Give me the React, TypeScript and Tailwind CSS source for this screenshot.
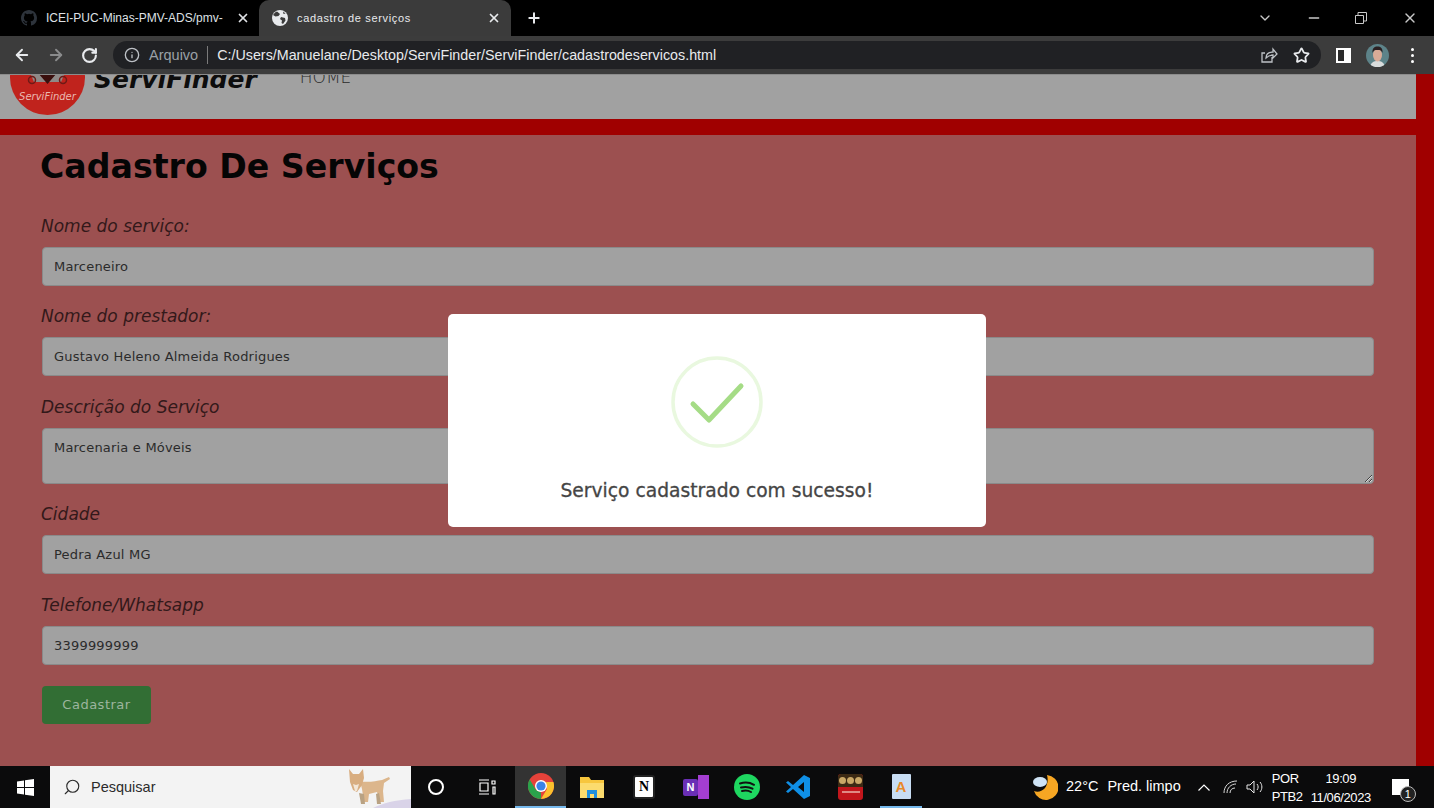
import React from "react"
import { ArrowLeft, ArrowRight, RotateCw, Info, Star, X, Plus, ChevronDown, Minus, Search } from "lucide-react"

const fields = [
  { label: "Nome do serviço:", value: "Marceneiro", top: "" },
  { label: "Nome do prestador:", value: "Gustavo Heleno Almeida Rodrigues", top: "mt-[20px]" },
  { label: "Descrição do Serviço", value: "Marcenaria e Móveis", top: "mt-[21px]", area: true },
  { label: "Cidade", value: "Pedra Azul MG", top: "mt-[20px]" },
  { label: "Telefone/Whatsapp", value: "3399999999", top: "mt-[21px]" },
]

const GithubMark = () => (
  <svg viewBox="0 0 16 16" className="h-4 w-4" fill="#2d333b">
    <path d="M8 0C3.58 0 0 3.58 0 8c0 3.54 2.29 6.53 5.47 7.59.4.07.55-.17.55-.38 0-.19-.01-.82-.01-1.49-2.01.37-2.53-.49-2.69-.94-.09-.23-.48-.94-.82-1.13-.28-.15-.68-.52-.01-.53.63-.01 1.08.58 1.23.82.72 1.21 1.87.87 2.33.66.07-.52.28-.87.51-1.07-1.78-.2-3.64-.89-3.64-3.95 0-.87.31-1.59.82-2.15-.08-.2-.36-1.02.08-2.12 0 0 .67-.21 2.2.82a7.4 7.4 0 0 1 4 0c1.53-1.04 2.2-.82 2.2-.82.44 1.1.16 1.92.08 2.12.51.56.82 1.27.82 2.15 0 3.07-1.87 3.75-3.65 3.95.29.25.54.73.54 1.48 0 1.07-.01 1.93-.01 2.2 0 .21.15.46.55.38A8 8 0 0 0 16 8c0-4.42-3.58-8-8-8z" />
  </svg>
)

const Globe = () => (
  <svg viewBox="0 0 16 16" className="h-4 w-4">
    <circle cx="8" cy="8" r="8" fill="#e8eaed" />
    <path d="M5 1.500 8 4 6.500 6 3.500 6.500 1 5 3 2.500ZM9 7l4 1 .5 2.500-2.500 3.500-1.500-1 .5-2.500-2-1.500ZM11 1.500l2.500 2-2 .5Z" fill="#3c3c3c" />
  </svg>
)

const Logo = () => (
  <div className="relative -mt-[35px] h-[75px] w-[75px] shrink-0 overflow-hidden rounded-full bg-[#c0231d]">
    <svg viewBox="0 0 75 75" className="absolute inset-0">
      <path d="M18 28h39l-6 14H24Z" fill="#8e8a88" />
      <path d="M28 33c-3-6 4-9 9.500-5 5.500-4 12.500-1 9.500 5l-9.500 11Z" fill="#3a0f0d" />
      <circle cx="22" cy="40" r="3.500" fill="none" stroke="#6e1a16" strokeWidth="1.500" />
      <circle cx="53" cy="40" r="3.500" fill="none" stroke="#6e1a16" strokeWidth="1.500" />
    </svg>
    <span className="absolute left-0 right-0 top-[52px] text-center font-['DejaVu_Sans'] text-[10px] italic leading-none text-[#eab9b0]">ServiFinder</span>
  </div>
)

const Spotify = () => (
  <svg viewBox="0 0 26 26" className="h-[26px] w-[26px]">
    <circle cx="13" cy="13" r="13" fill="#1ed760" />
    <path d="M6 9.500c5-1.500 10-1 14 1.300M7 13.500c4-1 8-.7 11.500 1.200M8 17c3.500-.8 6.500-.5 9 1" fill="none" stroke="#111" strokeWidth="2" strokeLinecap="round" />
  </svg>
)

const VsCode = () => (
  <svg viewBox="0 0 26 26" className="h-[26px] w-[26px]">
    <path d="M19 1l6 3v18l-6 3L8 15l-5 4-2-1.500L6 13 1 8.500 3 7l5 4Zm0 7-6 5 6 5Z" fill="#0f8fe6" />
  </svg>
)

const ChromeLogo = () => (
  <svg viewBox="0 0 26 26" className="h-[26px] w-[26px]">
    <circle cx="13" cy="13" r="13" fill="#e5423a" />
    <path d="M13 26A13 13 0 0 1 1.700 6.500L8 17l5 2.500Z" fill="#2aa24b" />
    <path d="M13 26 19 16l-1-7h7.400A13 13 0 0 1 13 26Z" fill="#fbc02d" />
    <circle cx="13" cy="13" r="6" fill="#fff" />
    <circle cx="13" cy="13" r="4.600" fill="#3b82e6" />
  </svg>
)

const Explorer = () => (
  <svg viewBox="0 0 24 22" className="h-[22px] w-[24px]">
    <path d="M0 1h9l2 3h13v4H0Z" fill="#f7c63d" />
    <path d="M0 7h24v15H0Z" fill="#fbdb6d" />
    <path d="M7 14h10v8h-3v-4h-4v4H7Z" fill="#1f8fdc" />
  </svg>
)

const Cat = () => (
  <svg viewBox="0 0 66 42" className="absolute bottom-0 right-0 h-[42px] w-[66px]">
    <path d="M28 42c10-5 22-8 38-9v9Z" fill="#d9d3e8" />
    <path d="M15 15c7 2 16 0 22-1l7-3 1 2-6 4-1 8 1 11h-4l-3-10-8 2-1 8h-4l-2-13Z" fill="#dcb68c" />
    <path d="M19 28l1 10h-4l-2-11ZM34 27l2 11h-4l-1-10Z" fill="#b9a283" />
    <path d="M4 3l4 5 6 0 4-5 1 9-2 7-5 7-4-2-3-8Z" fill="#d8ad80" />
    <path d="M8 18l3 1 3-1-2 7h-2Z" fill="#f3e6d6" />
  </svg>
)

const Avatar = () => (
  <svg viewBox="0 0 23 23" className="ml-[15px] h-[23px] w-[23px] rounded-full">
    <rect width="23" height="23" fill="#5d8389" />
    <path d="M4 23c1-5 4-6 7.500-6s6.500 1 7.500 6Z" fill="#d9dcdc" />
    <ellipse cx="11.500" cy="11" rx="4.500" ry="6.500" fill="#d9ab97" />
    <path d="M6.500 9c-.5-5 2-6.500 5-6.500s5.500 1.500 5 6.500c-1-2.500-2-3-5-3s-4 .5-5 3Z" fill="#2b2022" />
  </svg>
)

export default function App() {
  return (
    <div className="flex h-[808px] w-[1434px] flex-col overflow-hidden bg-black font-['Liberation_Sans',sans-serif]">
      {/* abas */}
      <div className="flex h-[36px] shrink-0 items-center bg-black text-[#e8eaed]">
        <div className="flex h-full w-[259px] items-center pl-[21px] pr-[9px] text-[12px] text-[#dfe1e5]">
          <GithubMark />
          <span className="ml-[9px] w-[180px] overflow-hidden whitespace-nowrap">ICEI-PUC-Minas-PMV-ADS/pmv-</span>
          <X className="ml-auto h-[14px] w-[14px]" strokeWidth={3} />
        </div>
        <div className="flex h-full w-[252px] items-center rounded-t-[10px] bg-[#3b3b3b] pl-[13px] pr-[10px] text-[11px] tracking-[0.65px]">
          <Globe />
          <span className="ml-[9px]">cadastro de serviços</span>
          <X className="ml-auto h-[14px] w-[14px]" strokeWidth={3} />
        </div>
        <Plus className="ml-[15px] h-[16px] w-[16px]" strokeWidth={3} />
        <div className="ml-auto flex items-center text-[#c8c8c8]">
          <ChevronDown className="h-[16px] w-[16px]" />
          <Minus className="ml-[33px] h-[16px] w-[16px]" />
          <svg viewBox="0 0 12 12" className="ml-[33px] h-[12px] w-[12px]" fill="none" stroke="currentColor">
            <path d="M.5 3.500h8v8h-8ZM3 3.500V.5h8.500V9H8.500" />
          </svg>
          <X className="ml-[35px] mr-[16px] h-[16px] w-[16px]" />
        </div>
      </div>

      {/* barra de endereço */}
      <div className="flex h-[38px] shrink-0 items-center bg-[#3c3c3c] text-[#e8eaed]">
        <ArrowLeft className="ml-[13px] h-[18px] w-[18px]" strokeWidth={2.500} />
        <ArrowRight className="ml-[16px] h-[18px] w-[18px] text-[#8a8b8c]" strokeWidth={2.500} />
        <RotateCw className="ml-[16px] h-[17px] w-[17px]" strokeWidth={3} />
        <div className="ml-[15px] flex h-[28px] w-[1208px] items-center rounded-full bg-[#202124] pl-[11px] pr-[11px] text-[14.500px]">
          <Info className="h-[16px] w-[16px] text-[#bdc1c6]" />
          <span className="ml-[9px] mt-[1px] text-[#9aa0a6]">Arquivo</span>
          <span className="ml-[9px] h-[18px] w-px bg-[#7a7a7a]" />
          <span className="ml-[9px] mt-[1px] text-[14.300px]">C:/Users/Manuelane/Desktop/ServiFinder/ServiFinder/cadastrodeservicos.html</span>
          <svg viewBox="0 0 18 18" className="ml-auto h-[18px] w-[18px]" fill="none" stroke="#bdc1c6" strokeWidth="1.300">
            <path d="M12 11v5H2V7h3M6 12c0-4 3-6 7-6V3l4 5-4 4V9c-3 0-5 1-7 3Z" />
          </svg>
          <Star className="ml-[15px] h-[17px] w-[17px]" strokeWidth={2.500} />
        </div>
        <div className="ml-[15px] flex h-[15px] w-[15px] border-2 border-white bg-[#2a2a2a]">
          <span className="ml-auto h-full w-[5px] bg-white" />
        </div>
        <Avatar />
        <div className="ml-[22px] flex flex-col gap-[3px]">
          <span className="h-[3px] w-[3px] rounded-full bg-white" />
          <span className="h-[3px] w-[3px] rounded-full bg-white" />
          <span className="h-[3px] w-[3px] rounded-full bg-white" />
        </div>
      </div>

      {/* página */}
      <div className="relative flex min-h-0 flex-1 bg-[#a00000]">
        <div className="flex w-[1416px] flex-col">
          <header className="flex h-[45px] shrink-0 items-start overflow-hidden border-t border-[#8c8c8c] bg-[#a1a1a1] pl-[10px]">
            <Logo />
            <span className="-mt-[8px] ml-[9px] font-['DejaVu_Sans'] text-[25px] font-bold italic leading-[26px] text-[#0d0d0d]">ServiFinder</span>
            <span className="-mt-[8px] ml-[43px] font-['DejaVu_Sans'] text-[17px] font-extralight leading-[20px] text-[#2a2a2a]">HOME</span>
          </header>
          <div className="h-[16px] shrink-0 bg-[#a00000]" />
          <main className="flex-1 bg-[#9c5050] pl-[40px] pr-[42px] font-['DejaVu_Sans',sans-serif]">
            <h1 className="mt-[12px] text-[33.200px] font-bold leading-[40px] text-[#050505]">Cadastro De Serviços</h1>
            <form className="mt-[29px] pl-[2px]">
              {fields.map((f) => (
                <div key={f.label} className={f.top}>
                  <label className="-ml-[1px] block text-[17px] italic leading-[20px] text-[#33191a]">{f.label}</label>
                  {f.area ? (
                    <textarea
                      readOnly
                      value={f.value}
                      className="mt-[11px] block h-[56px] w-full rounded-[4px] border border-[#8a8a8a] bg-[#a1a1a1] px-[11px] py-[9px] text-[13px] tracking-[0.2px] text-[#2b2b2b] outline-none"
                    />
                  ) : (
                    <input
                      readOnly
                      value={f.value}
                      className="mt-[11px] block h-[39px] w-full rounded-[4px] border border-[#8a8a8a] bg-[#a1a1a1] px-[11px] text-[13px] tracking-[0.2px] text-[#2b2b2b] outline-none"
                    />
                  )}
                </div>
              ))}
              <button type="button" className="mt-[21px] h-[38px] w-[109px] rounded-[4px] bg-[#326e34] text-[13px] tracking-[0.5px] text-[#9db59e]">
                Cadastrar
              </button>
            </form>
          </main>
        </div>

        {/* modal de sucesso */}
        <div className="absolute left-[448px] top-[240px] flex h-[213px] w-[538px] flex-col items-center rounded-[5px] bg-white font-['DejaVu_Sans',sans-serif]">
          <svg viewBox="0 0 92 92" className="mt-[42px] h-[92px] w-[92px]" fill="none">
            <circle cx="46" cy="46" r="44" stroke="#e9f8df" strokeWidth="3.500" />
            <path d="M22 48 38 64 70 30" stroke="#a5dc86" strokeWidth="5" strokeLinecap="round" strokeLinejoin="round" />
          </svg>
          <p className="mt-[31px] text-[18.700px] font-medium leading-[24px] text-[#454545] [-webkit-text-stroke:0.3px_#454545]">Serviço cadastrado com sucesso!</p>
        </div>
      </div>

      {/* barra de tarefas */}
      <div className="flex h-[42px] shrink-0 items-center bg-[#0b0b0c] text-white">
        <div className="flex h-full w-[50px] items-center justify-center">
          <svg viewBox="0 0 17 17" className="h-[17px] w-[17px]" fill="#fff">
            <path d="M0 2.400 7 1.400V8H0ZM8 1.200 17 0v8H8ZM0 9h7v6.600l-7-1ZM8 9h9v8l-9-1.200Z" />
          </svg>
        </div>
        <div className="relative flex h-full w-[361px] items-center bg-[#f3f3f3] pl-[13px] text-[14.500px] text-[#2b2b2b]">
          <Search className="h-[18px] w-[18px] -scale-x-100" strokeWidth={1.500} />
          <span className="ml-[10px] mt-[1px]">Pesquisar</span>
          <Cat />
        </div>
        <div className="ml-[17px] h-[16px] w-[16px] rounded-full border-[2.500px] border-white" />
        <svg viewBox="0 0 18 16" className="ml-[34px] h-[16px] w-[18px]" fill="none" stroke="#fff" strokeWidth="1.200">
          <path d="M1 1h10M1 15h10M2 4h8v8H2ZM14 2h3v3h-3ZM15 8h2v7h-2Z" />
        </svg>
        <div className="ml-[19px] flex h-full w-[51px] items-center justify-center border-b-[2px] border-[#76b9ed] bg-[#333]">
          <ChromeLogo />
        </div>
        <div className="ml-[14px]"><Explorer /></div>
        <div className="ml-[29px] flex h-[24px] w-[22px] items-center justify-center rounded-[3px] border-2 border-[#222] bg-white font-['Liberation_Serif'] text-[14px] font-bold leading-none text-black">N</div>
        <div className="ml-[28px] flex h-[24px] w-[26px] items-center">
          <span className="flex h-[17px] w-[15px] items-center justify-center rounded-[2px] bg-[#6a2fb5] text-[11px] font-bold text-white">N</span>
          <span className="h-[24px] w-[11px] bg-[#a43ed1]" />
        </div>
        <div className="ml-[25px]"><Spotify /></div>
        <div className="ml-[25px]"><VsCode /></div>
        <div className="ml-[27px] flex h-[26px] w-[25px] flex-col overflow-hidden rounded-[3px] bg-[#c2161c]">
          <div className="flex h-[13px] items-center justify-center gap-[1px] bg-[#3c2a14]">
            <span className="h-[7px] w-[7px] rounded-full bg-[#c9a867]" />
            <span className="h-[7px] w-[7px] rounded-full bg-[#c9a867]" />
            <span className="h-[7px] w-[7px] rounded-full bg-[#c9a867]" />
          </div>
          <span className="mx-auto mt-[4px] h-[2px] w-[18px] bg-[#e08a85]" />
        </div>
        <div className="ml-[17px] flex h-full w-[42px] items-center justify-center border-b-[2px] border-[#76b9ed]">
          <div className="flex h-[25px] w-[19px] items-center justify-center rounded-[1px] bg-[#c8ddf3] text-[15px] font-bold leading-none text-[#e8892a]">A</div>
        </div>
        <svg viewBox="0 0 26 26" className="ml-[110px] h-[26px] w-[26px]">
          <path d="M15 1a12.500 12.500 0 1 1-13 16c8 3 16-5 13-16Z" fill="#f6a623" />
          <ellipse cx="8" cy="8" rx="7" ry="5" fill="#cfe3f5" />
        </svg>
        <span className="ml-[8px] text-[14.500px] whitespace-nowrap">22°C</span>
        <span className="ml-[9px] text-[14.500px] whitespace-nowrap">Pred. limpo</span>
        <svg viewBox="0 0 12 7" className="ml-[17px] h-[7px] w-[12px]" fill="none" stroke="#fff" strokeWidth="1.200"><path d="M.5 6.500 6 1l5.500 5.500" /></svg>
        <svg viewBox="0 0 16 14" className="ml-[13px] h-[14px] w-[16px]" fill="none" stroke="#d8d8d8"><path d="M1 13c0-7 5-12 13-12M4 13c0-5 4-9 9-9M7 13c0-3 2-5 5-5" /></svg>
        <svg viewBox="0 0 17 14" className="ml-[7px] h-[14px] w-[17px]" fill="none" stroke="#e8e8e8"><path d="M1 5h3l4-4v12L4 9H1ZM11 4c1.500 2 1.500 4 0 6M14 2c2.500 3 2.500 7 0 10" /></svg>
        <div className="ml-[9px] mt-[2px] flex w-[31px] flex-col items-start text-[13px] leading-[18px] tracking-[-0.4px]">
          <span>POR</span>
          <span>PTB2</span>
        </div>
        <div className="ml-[7px] mt-[1px] flex w-[62px] flex-col items-center text-[13px] leading-[19px] tracking-[-0.4px]">
          <span>19:09</span>
          <span className="whitespace-nowrap">11/06/2023</span>
        </div>
        <div className="relative ml-[20px] h-[16px] w-[17px] bg-white">
          <span className="absolute -bottom-[7px] -right-[7px] flex h-[16px] w-[16px] items-center justify-center rounded-full border border-[#bbb] bg-[#222] text-[11px] leading-none">1</span>
        </div>
      </div>
    </div>
  )
}
